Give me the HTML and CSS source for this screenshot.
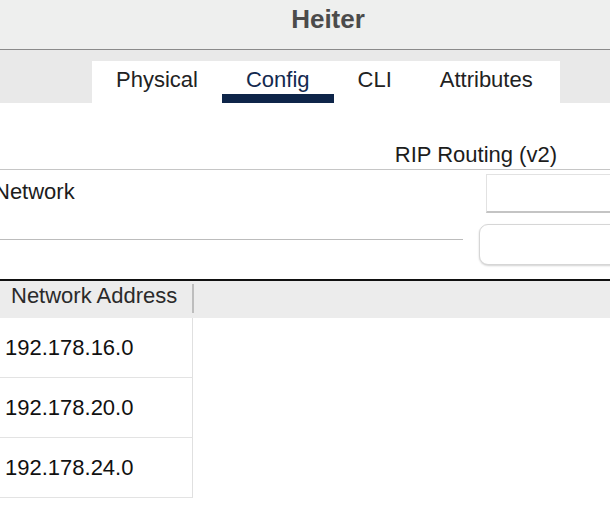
FILE: index.html
```html
<!DOCTYPE html>
<html lang="en">
<head>
<meta charset="utf-8">
<title>Heiter</title>
<link rel="stylesheet" href="styles.css">
</head>
<body>
<div class="window">
  <header class="titlebar"><span class="title">Heiter</span></header>
  <div class="tabstrip">
    <nav class="tabs">
      <span class="tab">Physical</span>
      <span class="tab active">Config</span>
      <span class="tab">CLI</span>
      <span class="tab">Attributes</span>
    </nav>
  </div>
  <main class="content">
    <div class="section-title">RIP Routing (v2)</div>
    <div class="network-row">
      <div class="network-left">
        <div class="network-label">Network</div>
      </div>
      <div class="network-right">
        <div class="net-input"></div>
        <div class="add-btn"></div>
      </div>
    </div>
    <div class="table">
      <div class="thead">
        <div class="th">Network Address</div>
        <div class="th-sep"></div>
      </div>
      <div class="tbody">
        <div class="row">192.178.16.0</div>
        <div class="row">192.178.20.0</div>
        <div class="row">192.178.24.0</div>
      </div>
    </div>
  </main>
</div>
</body>
</html>
```
FILE: styles.css
```css
* { box-sizing: border-box; }
html, body { margin: 0; padding: 0; }
body {
  width: 610px;
  height: 525px;
  overflow: hidden;
  background: #ffffff;
  font-family: "Liberation Sans", Arial, Helvetica, sans-serif;
  color: #1c1c1c;
}
.window { width: 610px; overflow: hidden; }

.titlebar {
  height: 50px;
  background: #eeefee;
  border-bottom: 1px solid #8a8a8a;
  display: flex;
  justify-content: center;
  padding-left: 46px;
}
.title {
  font-size: 26px;
  font-weight: bold;
  color: #4b4b4b;
  line-height: 30px;
  padding-top: 4px;
}

.tabstrip {
  height: 53px;
  background: #e9e9e9;
  padding-top: 11px;
  padding-left: 92px;
}
.tabs {
  display: flex;
  width: 468px;
  height: 42px;
  background: #ffffff;
}
.tab {
  position: relative;
  padding: 0 24px 4px;
  font-size: 22px;
  line-height: 38px;
  color: #222222;
  white-space: nowrap;
}
.tab.active { color: #13294f; }
.tab.active::after {
  content: "";
  position: absolute;
  left: 0;
  right: 0;
  bottom: 0;
  height: 9px;
  background: #0e2549;
}

.content { background: #ffffff; }

.section-title {
  height: 67px;
  padding-top: 39px;
  padding-right: 53px;
  text-align: right;
  font-size: 22px;
  line-height: 26px;
  border-bottom: 1px solid #c6c6c6;
}

.network-row {
  display: flex;
  height: 109px;
}
.network-left { width: 463px; flex: none; }
.network-label {
  height: 70px;
  padding-top: 9px;
  margin-left: -6px;
  font-size: 22px;
  line-height: 26px;
  border-bottom: 1px solid #bcbcbc;
}
.network-right {
  margin-left: 16px;
  width: 160px;
  flex: none;
}
.net-input {
  margin-top: 4px;
  margin-left: 7px;
  height: 39px;
  border: 1px solid #e2e2e2;
  border-bottom: 2px solid #c4c4c4;
  background: #ffffff;
}
.add-btn {
  margin-top: 11px;
  height: 41px;
  border: 1px solid #d6d6d6;
  border-radius: 9px;
  background: #ffffff;
  box-shadow: 0 1px 2px rgba(0, 0, 0, 0.18);
}

.table { border-top: 2px solid #111111; }
.thead {
  display: flex;
  height: 37px;
  background: #ececec;
}
.th {
  width: 192px;
  padding-left: 11px;
  padding-top: 2px;
  font-size: 22px;
  line-height: 26px;
  color: #2a2a2a;
}
.th-sep {
  width: 2px;
  height: 29px;
  margin-top: 3px;
  background: #bdbdbd;
}
.tbody { width: 193px; }
.row {
  height: 60px;
  padding-left: 5px;
  font-size: 22px;
  line-height: 59px;
  border-right: 1px solid #e0e0e0;
  border-bottom: 1px solid #e3e3e3;
  color: #111111;
}
```
